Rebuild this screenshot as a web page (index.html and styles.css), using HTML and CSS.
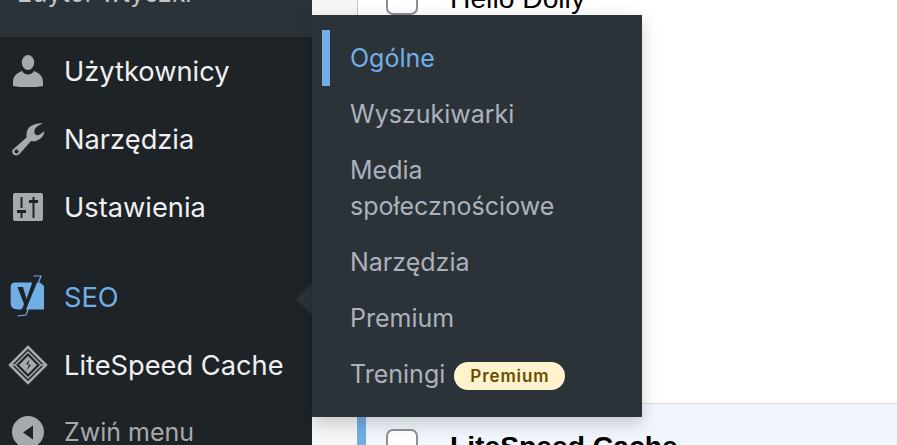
FILE: index.html
```html
<!DOCTYPE html>
<html lang="pl">
<head>
    <meta charset="UTF-8">
    <meta name="viewport" content="width=device-width, initial-scale=1.0">
    <title>Wtyczki</title>
    <link rel="stylesheet" href="styles.css">
</head>
<body>
    <aside class="sidebar">
        <div class="menu-parent"><span>Edytor wtyczki</span></div>

        <a class="menu-item">
            <span class="menu-icon">
                <svg width="30" height="32" viewBox="0 0 30 32"><ellipse cx="15" cy="7.500" rx="6.200" ry="7.500"/><path d="M0 27c0-6 4-9 9-11 1.500 2.500 3.500 3.500 6 3.500s4.500-1 6-3.500c5 2 9 5 9 11v4c-4 1-9 1.300-15 1.300S4 32 0 31z"/></svg>
            </span>
            <span>Użytkownicy</span>
        </a>
        <a class="menu-item">
            <span class="menu-icon">
                <svg width="33" height="33" viewBox="0 0 33 33"><path fill-rule="evenodd" d="M1.500 26 14.500 14.500C14 9 15.500 5 19 3 22 1 27 0 31 0L26 3C23 5 22 7 22.500 10 23 12 25 12.500 27 12L32.500 8C32 13 29 16 25 17.500 22.500 18.500 21 18.500 19 18L8 30.500C6 33 2.500 33 1 31-.500 29 0 27 1.500 26zM4.500 26.500a2 2 0 1 0 .01 0z"/></svg>
            </span>
            <span>Narzędzia</span>
        </a>
        <a class="menu-item">
            <span class="menu-icon">
                <svg width="30" height="28" viewBox="0 0 30 28"><path fill-rule="evenodd" d="M2 0h26a2 2 0 0 1 2 2v24a2 2 0 0 1-2 2H2a2 2 0 0 1-2-2V2a2 2 0 0 1 2-2zM7.500 4v11h2V4zM4 17v3h3.500v5h2v-5H13v-3zM19.500 4v3H16v3h3.500v15h2V10H25V7h-3.500V4z"/></svg>
            </span>
            <span>Ustawienia</span>
        </a>

        <div class="menu-separator"></div>

        <a class="menu-item menu-item-current">
            <span class="menu-icon">
                <svg width="36" height="44" viewBox="0 0 36 44"><path fill="#72aee6" d="M5 7.500H30L34 11V34.500H8Q.7 34 .7 29V12Q.7 7.500 5 7.500z"/><path fill="none" stroke="#72aee6" stroke-width="1.200" d="M23.500 1H31L16 40 7.500 41"/><path fill="#1d2327" d="M7.500 12H13L16.500 24 24 2.500H29L15 37 9 38 13 32 14 29z"/></svg>
            </span>
            <span>SEO</span>
            <span class="menu-arrow"></span>
        </a>
        <a class="menu-item">
            <span class="menu-icon">
                <svg width="40" height="40" viewBox="0 0 40 40"><path fill="none" stroke="#a7aaad" stroke-width="2.500" d="M20 2 38 20 20 38 2 20z"/><path fill="none" stroke="#a7aaad" stroke-width="1.500" d="M20 7 33 20 20 33 7 20zM2 20H7M33 20H38"/><path fill="#a7aaad" d="M20 11 29 20 20 29 11 20z"/><path fill="#1d2327" d="M22 14l-4 5 3 1-3 6 5-6-3-1z"/></svg>
            </span>
            <span>LiteSpeed Cache</span>
        </a>
        <a class="menu-item menu-item-collapse">
            <span class="menu-icon">
                <svg width="32" height="32" viewBox="0 0 32 32"><path fill-rule="evenodd" d="M16 0a16 16 0 1 1 0 32 16 16 0 0 1 0-32zM21 9.500 11 16.500l10 7z"/></svg>
            </span>
            <span>Zwiń menu</span>
        </a>
    </aside>

    <main class="content">
        <div class="plugins">
            <div class="plugin-row plugin-row-first">
                <span class="check"></span>
                <span class="plugin-name">Hello Dolly</span>
            </div>
            <div class="plugin-row plugin-row-active">
                <span class="check"></span>
                <strong class="plugin-name plugin-name-active">LiteSpeed Cache</strong>
            </div>
        </div>
    </main>

    <nav class="flyout">
        <a class="flyout-item flyout-item-current">Ogólne</a>
        <a class="flyout-item">Wyszukiwarki</a>
        <a class="flyout-item">Media społecznościowe</a>
        <a class="flyout-item">Narzędzia</a>
        <a class="flyout-item">Premium</a>
        <a class="flyout-item">Treningi <span class="badge">Premium</span></a>
    </nav>
</body>
</html>
```

FILE: styles.css
```css
html, body {
    height: 100%;
}
body {
    margin: 0;
    display: flex;
    overflow: hidden;
    position: relative;
    font-family: Inter, "Liberation Sans", sans-serif;
    background-color: #f6f6f6;
}
.sidebar {
    width: 312px;
    flex-shrink: 0;
    background-color: #1d2327;
}
.menu-parent {
    height: 37px;
    padding-left: 17px;
    overflow: hidden;
    font-size: 25px;
    line-height: 30px;
    color: #c3c4c7;
    background-color: #2c3338;
}
.menu-parent span {
    display: block;
    margin-top: -22px;
}
.menu-item {
    position: relative;
    display: flex;
    align-items: center;
    height: 68px;
    font-size: 27.25px;
    color: #f0f0f1;
}
.menu-icon {
    display: flex;
    justify-content: center;
    align-items: center;
    width: 56px;
    margin-right: 8px;
    flex-shrink: 0;
}
.menu-icon svg {
    fill: #a7aaad;
}
.menu-separator {
    height: 22px;
}
.menu-item-current {
    color: #72aee6;
}
.menu-item-collapse {
    height: 66px;
    font-size: 25px;
    color: #a7aaad;
}
.menu-arrow {
    position: absolute;
    right: 0;
    top: 20px;
    border: 16px solid transparent;
    border-right-color: #2c3338;
    border-left-width: 0;
}
.content {
    flex: 1;
    padding-left: 45px;
}
.plugins {
    height: 100%;
    background-color: white;
    border-left: 1px solid #c3c4c7;
}
.plugin-row {
    display: flex;
    align-items: flex-start;
    padding-left: 28px;
    color: black;
}
.plugin-row-first {
    height: 421px;
    margin-top: -17px;
    border-bottom: 1px solid #dcdcde;
    box-sizing: border-box;
}
.plugin-row-active {
    height: 59px;
    margin-left: -1px;
    padding-top: 25px;
    box-sizing: border-box;
    background-color: #f0f6fc;
    border-left: 9px solid #72aee6;
    padding-left: 20px;
}
.check {
    width: 28px;
    height: 28px;
    margin-right: 32px;
    background-color: white;
    border: 2px solid #8c8f94;
    border-radius: 7px;
    flex-shrink: 0;
}
.plugin-name {
    font-family: "Liberation Sans", Arial, sans-serif;
    font-size: 28.25px;
    line-height: 30px;
}
.plugin-name-active {
    margin-top: 2px;
}
.flyout {
    position: absolute;
    left: 312px;
    top: 15px;
    width: 330px;
    box-sizing: border-box;
    padding: 15px 0;
    background-color: #2c3338;
    box-shadow: 0 6px 16px rgba(0,0,0,0.2);
}
.flyout-item {
    display: block;
    margin-left: 10px;
    padding: 10px 50px 10px 20px;
    border-left: 8px solid transparent;
    font-size: 25px;
    line-height: 36px;
    color: #adb1bd;
}
.flyout-item-current {
    color: #72aee6;
    border-left-color: #72aee6;
}
.badge {
    display: inline-block;
    margin-left: 2px;
    padding: 0 16px;
    font-size: 17px;
    line-height: 28px;
    font-weight: 600;
    letter-spacing: 0.9px;
    vertical-align: 1px;
    color: #674e00;
    background-color: #fff3cd;
    border-radius: 14px;
}
```
